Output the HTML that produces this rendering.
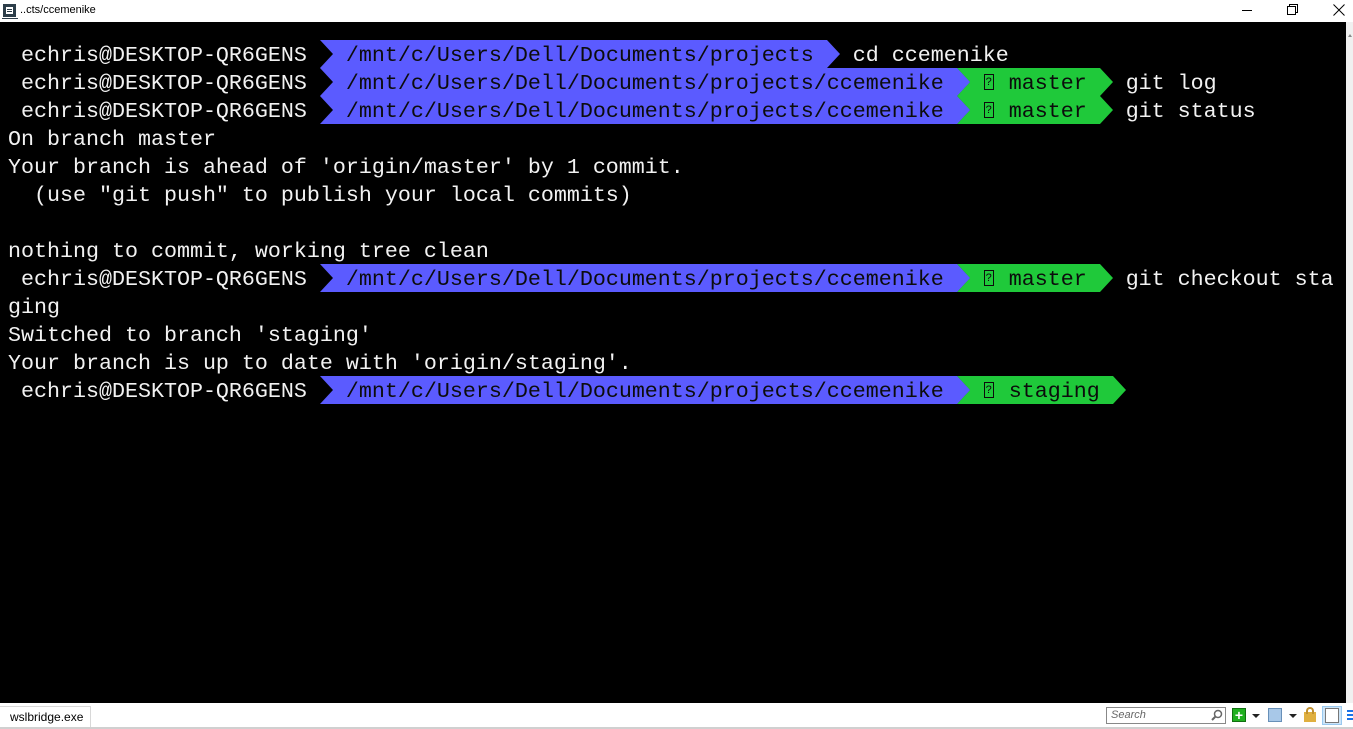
<!DOCTYPE html>
<html><head><meta charset="utf-8"><style>
*{margin:0;padding:0;box-sizing:border-box}
body{width:1353px;height:729px;overflow:hidden;background:#fff;position:relative;font-family:"Liberation Sans",sans-serif}
#title{position:absolute;left:0;top:0;width:1353px;height:22px;background:#fff}
#term{position:absolute;left:0;top:22px;width:1346px;height:681px;background:#000}
#sb{position:absolute;left:1346px;top:22px;width:7px;height:681px;background:#f0f0f0}
pre{position:absolute;left:8px;top:42px;font-family:"Liberation Mono",monospace;font-size:21.67px;line-height:28px;color:#f2f2f2;white-space:pre}
.d{color:#0c0c0c}
.q{display:inline-block;width:13px;height:16px;vertical-align:-1px;position:relative}
.q i{position:absolute;left:1px;top:0;width:10px;height:16px;border:1px solid #0c0c0c;font-style:normal;font-size:11px;line-height:14px;text-align:center;font-family:"Liberation Sans",sans-serif}
#status{position:absolute;left:0;top:703px;width:1353px;height:26px;background:#fff;border-bottom:2px solid #d0d0d0}
</style></head><body>
<div id="title">
<svg width="16" height="16" style="position:absolute;left:2px;top:3px"><rect x="1" y="1" width="13" height="13" fill="#2d3e4a"/><rect x="4" y="4" width="7" height="7" fill="#fff"/><rect x="5" y="6" width="5" height="1" fill="#2d3e4a"/><rect x="5" y="8" width="5" height="1" fill="#2d3e4a"/><rect x="0" y="15" width="16" height="1" fill="#2d3e4a"/></svg>
<div style="position:absolute;left:20px;top:4px;font-size:11px;color:#000">..cts/ccemenike</div>
<div style="position:absolute;left:1242px;top:10px;width:10px;height:1px;background:#000"></div>
<svg width="12" height="12" style="position:absolute;left:1287px;top:4px"><rect x="0.5" y="2.5" width="8" height="8" fill="none" stroke="#000"/><path d="M2.5 2.5V0.5h8v8h-2" fill="none" stroke="#000"/></svg>
<svg width="12" height="12" style="position:absolute;left:1333px;top:4px"><path d="M0.5 0.5L11.5 11.5M11.5 0.5L0.5 11.5" stroke="#000"/></svg>
</div>
<div id="term"></div>
<div id="sb"><div style="position:absolute;left:2px;top:12px;width:0;height:0;border-left:2px solid transparent;border-right:2px solid transparent;border-bottom:3px solid #888"></div></div>
<svg width="1346" height="729" style="position:absolute;left:0;top:0">
<g fill="#5b5bff">
<polygon points="320,40 827,40 840,54 827,68 320,68 333,54"/>
<polygon points="320,68 957,68 970,82 957,96 320,96 333,82"/>
<polygon points="320,96 957,96 970,110 957,124 320,124 333,110"/>
<polygon points="320,264 957,264 970,278 957,292 320,292 333,278"/>
<polygon points="320,376 957,376 970,390 957,404 320,404 333,390"/>
</g>
<g fill="#1fc93a">
<polygon points="957,68 1100,68 1113,82 1100,96 957,96 970,82"/>
<polygon points="957,96 1100,96 1113,110 1100,124 957,124 970,110"/>
<polygon points="957,264 1100,264 1113,278 1100,292 957,292 970,278"/>
<polygon points="957,376 1113,376 1126,390 1113,404 957,404 970,390"/>
</g>
<g fill="#5b5bff">
<polygon points="957,68 970,82 957,96"/><polygon points="957,96 970,110 957,124"/><polygon points="957,264 970,278 957,292"/><polygon points="957,376 970,390 957,404"/>
</g>
</svg>
<pre> echris@DESKTOP-QR6GENS   <span class="d">/mnt/c/Users/Dell/Documents/projects</span>   cd ccemenike
 echris@DESKTOP-QR6GENS   <span class="d">/mnt/c/Users/Dell/Documents/projects/ccemenike</span>   <span class="d"><span class="q"><i>?</i></span> master</span>   git log
 echris@DESKTOP-QR6GENS   <span class="d">/mnt/c/Users/Dell/Documents/projects/ccemenike</span>   <span class="d"><span class="q"><i>?</i></span> master</span>   git status
On branch master
Your branch is ahead of 'origin/master' by 1 commit.
  (use "git push" to publish your local commits)

nothing to commit, working tree clean
 echris@DESKTOP-QR6GENS   <span class="d">/mnt/c/Users/Dell/Documents/projects/ccemenike</span>   <span class="d"><span class="q"><i>?</i></span> master</span>   git checkout sta
ging
Switched to branch 'staging'
Your branch is up to date with 'origin/staging'.
 echris@DESKTOP-QR6GENS   <span class="d">/mnt/c/Users/Dell/Documents/projects/ccemenike</span>   <span class="d"><span class="q"><i>?</i></span> staging</span></pre>
<div id="status">
<div style="position:absolute;left:0;top:3px;width:91px;height:21px;border-right:1px solid #d8d8d8;border-top:1px solid #d8d8d8;font-size:12px;line-height:20px;padding-left:10px;color:#000">wslbridge.exe</div>
<div style="position:absolute;left:1106px;top:4px;width:120px;height:17px;border:1px solid #888;font-size:11px;font-style:italic;color:#666;padding-left:4px;line-height:15px">Search</div>
<svg width="12" height="12" style="position:absolute;left:1211px;top:6px"><circle cx="7" cy="5" r="3.5" fill="none" stroke="#666" stroke-width="1.5"/><path d="M4.5 7.5L1 11" stroke="#666" stroke-width="2"/></svg>
<div style="position:absolute;left:1232px;top:5px;width:14px;height:14px;background:#20b020;border:1px solid #107010;color:#fff;font-weight:bold;font-size:14px;line-height:12px;text-align:center">+</div>
<div style="position:absolute;left:1252px;top:11px;border-left:4px solid transparent;border-right:4px solid transparent;border-top:4px solid #222"></div>
<div style="position:absolute;left:1268px;top:5px;width:14px;height:14px;background:#a8c8e8;border:1px solid #6890b8"></div>
<div style="position:absolute;left:1289px;top:11px;border-left:4px solid transparent;border-right:4px solid transparent;border-top:4px solid #222"></div>
<div style="position:absolute;left:1304px;top:9px;width:12px;height:10px;background:#e0b040"></div>
<div style="position:absolute;left:1306px;top:4px;width:8px;height:7px;border:2px solid #c09030;border-bottom:none;border-radius:4px 4px 0 0"></div>
<div style="position:absolute;left:1322px;top:3px;width:20px;height:19px;background:#cce4f7;border:1px solid #99c9ef"></div>
<div style="position:absolute;left:1325px;top:5px;width:14px;height:15px;background:#fff;border:1px solid #777"></div>
<div style="position:absolute;left:1347px;top:7px;width:6px;height:2px;background:#1a73e8;box-shadow:0 4px 0 #1a73e8,0 8px 0 #1a73e8"></div>
</div>
</body></html>
